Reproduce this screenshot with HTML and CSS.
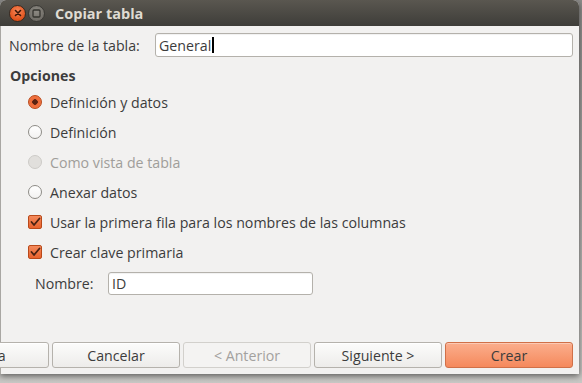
FILE: index.html
```html
<!DOCTYPE html>
<html lang="es">
<head>
<meta charset="utf-8">
<title>Copiar tabla</title>
<link rel="stylesheet" href="styles.css">
</head>
<body>
<div class="window">
  <div class="titlebar">
    <span class="wbtn close">
      <svg width="8" height="8" viewBox="0 0 8 8"><path d="M1.5 1.5 L6.5 6.5 M6.5 1.5 L1.5 6.5" stroke="#3a1608" stroke-width="1.6" stroke-linecap="round"/></svg>
    </span>
    <span class="wbtn max">
      <svg width="9" height="9" viewBox="0 0 9 9"><rect x="1" y="1" width="7" height="7" rx="1" fill="none" stroke="#35342f" stroke-width="1.3"/></svg>
    </span>
    <span class="title">Copiar tabla</span>
  </div>
  <div class="content">
    <div class="name-row">
      <label class="name-label">Nombre de la tabla:</label>
      <div class="entry main-entry"><span>General</span><span class="caret"></span></div>
    </div>
    <div class="section-title">Opciones</div>
    <div class="options">
      <div class="opt"><span class="radio checked"></span><span>Definición y datos</span></div>
      <div class="opt"><span class="radio"></span><span>Definición</span></div>
      <div class="opt disabled"><span class="radio off"></span><span>Como vista de tabla</span></div>
      <div class="opt"><span class="radio"></span><span>Anexar datos</span></div>
      <div class="opt"><span class="check"><svg width="12" height="12" viewBox="0 0 12 12"><path d="M2.5 6 L5 9 L10.5 2.5" fill="none" stroke="#4a2112" stroke-width="1.8" stroke-linejoin="round" stroke-linecap="round"/></svg></span><span>Usar la primera fila para los nombres de las columnas</span></div>
      <div class="opt"><span class="check"><svg width="12" height="12" viewBox="0 0 12 12"><path d="M2.5 6 L5 9 L10.5 2.5" fill="none" stroke="#4a2112" stroke-width="1.8" stroke-linejoin="round" stroke-linecap="round"/></svg></span><span>Crear clave primaria</span></div>
    </div>
    <div class="key-row">
      <label class="key-label">Nombre:</label>
      <div class="entry key-entry">ID</div>
    </div>
    <div class="spacer"></div>
    <div class="buttons">
      <button class="btn">Ayuda</button>
      <button class="btn">Cancelar</button>
      <button class="btn disabled">&lt; Anterior</button>
      <button class="btn">Siguiente &gt;</button>
      <button class="btn primary">Crear</button>
    </div>
  </div>
</div>
</body>
</html>
```
FILE: styles.css
```css
* { box-sizing: border-box; }
html, body { margin: 0; padding: 0; }
body {
  width: 582px;
  height: 383px;
  overflow: hidden;
  background: linear-gradient(#8d8c8a, #c9c8c5);
  font-family: "Open Sans", "DejaVu Sans", sans-serif;
  font-size: 14.2px;
  color: #3c3c3c;
}
.window {
  width: 579px;
  height: 374px;
  display: flex;
  flex-direction: column;
  background: #f2f1f0;
  border-radius: 6px 6px 0 0;
  box-shadow: 0 2px 6px rgba(0,0,0,0.55);
  overflow: hidden;
}
.titlebar {
  height: 26px;
  flex: none;
  display: flex;
  align-items: center;
  padding-left: 9px;
  background: linear-gradient(#5a5750, #3e3d39);
}
.wbtn {
  width: 17px;
  height: 17px;
  border-radius: 50%;
  display: flex;
  align-items: center;
  justify-content: center;
  flex: none;
}
.close {
  background: radial-gradient(circle at 50% 35%, #f7875a, #e2531c 70%, #c9420f);
  border: 1px solid #3a2a20;
}
.max {
  margin-left: 2px;
  background: radial-gradient(circle at 50% 35%, #8d8a83, #6f6c66 75%);
  border: 1px solid #3a3935;
}
.title {
  margin-left: 10px;
  font-weight: bold;
  font-size: 14.5px;
  color: #dfdbd2;
}
.content {
  flex: 1;
  display: flex;
  flex-direction: column;
  padding: 7px 6px 6px 8px;
  border-left: 1px solid #a9a7a3;
}
.name-row {
  display: flex;
  align-items: center;
  height: 24px;
}
.name-label { width: 146px; flex: none; }
.entry {
  background: #fff;
  border: 1px solid #b4b1ab;
  border-radius: 3px;
  box-shadow: inset 0 1px 1px rgba(0,0,0,0.06);
  display: flex;
  align-items: center;
  padding-left: 3px;
}
.main-entry { flex: 1; height: 24px; }
.caret {
  display: inline-block;
  width: 2px;
  height: 16px;
  background: #000;
  margin-left: 1px;
}
.section-title {
  margin-top: 9px;
  height: 20px;
  line-height: 20px;
  font-weight: bold;
  padding-left: 1px;
}
.options {
  margin-top: 1px;
  padding-left: 19px;
  display: flex;
  flex-direction: column;
}
.opt {
  height: 30px;
  display: flex;
  align-items: center;
  gap: 8px;
}
.opt.disabled { color: #a09e9a; }
.radio {
  width: 14px;
  height: 14px;
  border-radius: 50%;
  flex: none;
  border: 1px solid #8e8c87;
  background: linear-gradient(#ffffff, #f3f2f1);
}
.radio.checked {
  border-color: #b9491a;
  background: radial-gradient(circle, #5b2312 0 2.5px, #ef6a37 3px, #f07a4a 100%);
}
.radio.off {
  border-color: #cdcbc7;
  background: #e1dfdc;
}
.check {
  width: 14px;
  height: 14px;
  flex: none;
  border-radius: 2px;
  border: 1px solid #b9491a;
  background: linear-gradient(#f48a5c, #e8622d);
  display: flex;
  align-items: center;
  justify-content: center;
}
.key-row {
  margin-top: 5px;
  display: flex;
  align-items: center;
  height: 23px;
  padding-left: 26px;
}
.key-label { width: 73px; flex: none; }
.key-entry { width: 205px; height: 23px; }
.spacer { flex: 1; }
.buttons {
  display: flex;
  justify-content: flex-end;
  gap: 3px;
}
.btn {
  flex: none;
  width: 128px;
  height: 26px;
  font: inherit;
  color: #3c3c3c;
  border: 1px solid #b5b2ac;
  border-radius: 3px;
  background: linear-gradient(#fcfcfb, #edecea);
  box-shadow: inset 0 1px 0 #fff;
  padding: 0;
}
.btn.disabled {
  color: #a3a19e;
  border-color: #d2d0cc;
  background: #f4f3f2;
  box-shadow: none;
}
.btn.primary {
  border-color: #d07048;
  background: linear-gradient(#fbae8d, #f5895c);
  box-shadow: inset 0 1px 0 rgba(255,255,255,0.35);
}
```
